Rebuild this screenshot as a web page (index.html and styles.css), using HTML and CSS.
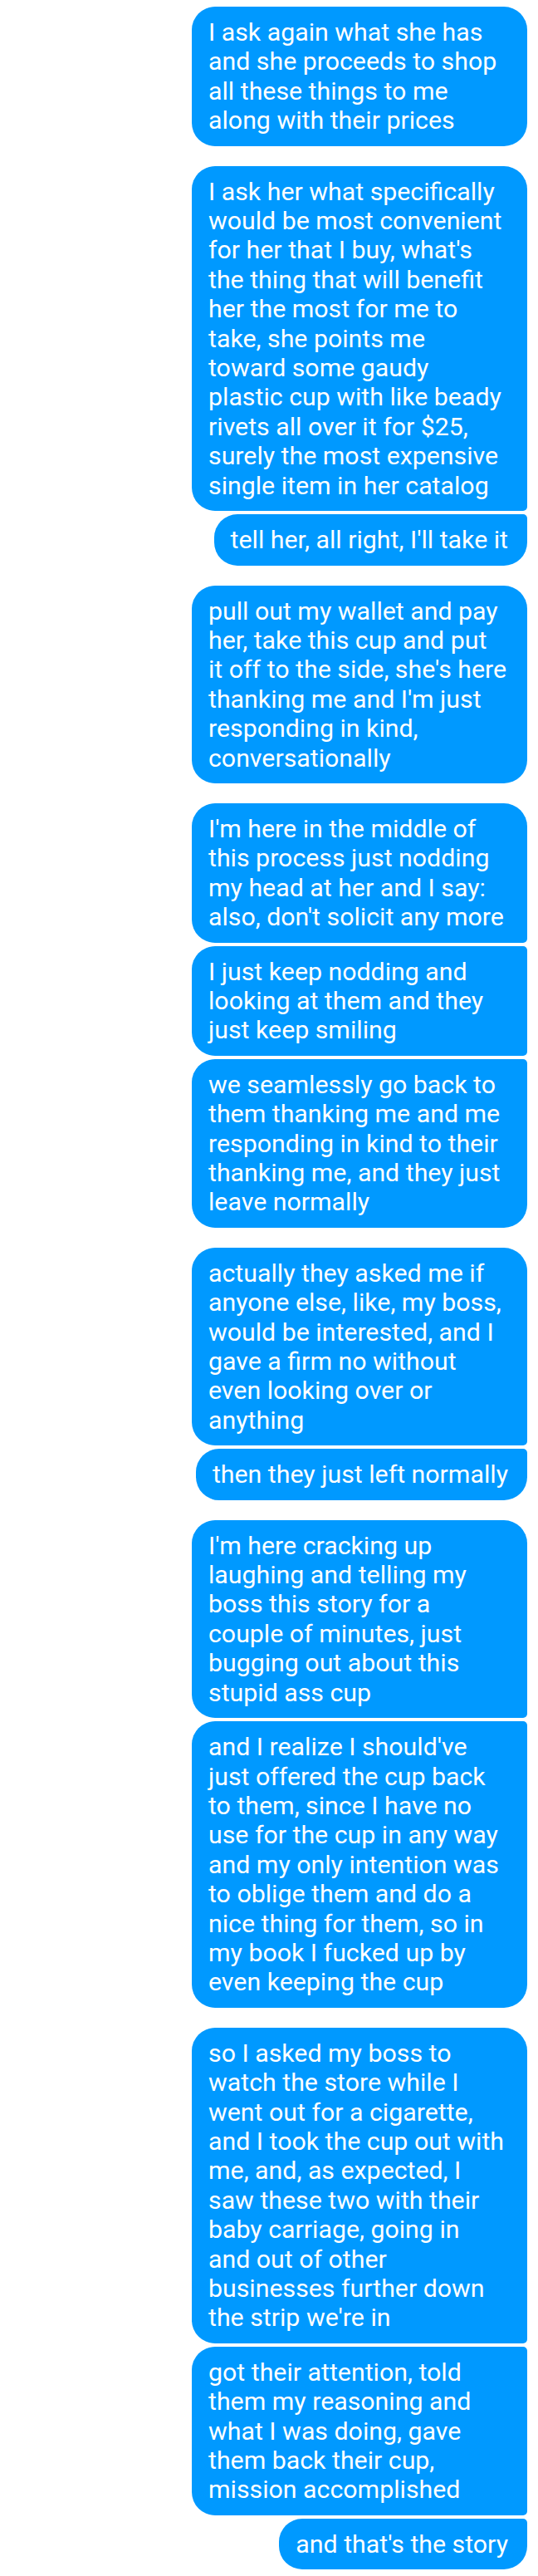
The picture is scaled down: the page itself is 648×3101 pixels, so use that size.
FILE: index.html
```html
<!DOCTYPE html>
<html lang="en">
<head>
<meta charset="utf-8">
<title>Conversation</title>
<link rel="stylesheet" href="styles.css">
</head>
<body>
<main class="thread">
  <div class="group">
    <div class="bubble">I ask again what she has and she proceeds to shop all these things to me along with their prices</div>
  </div>
  <div class="group">
    <div class="bubble">I ask her what specifically would be most convenient for her that I buy, what's the thing that will benefit her the most for me to take, she points me toward some gaudy plastic cup with like beady rivets all over it for $25, surely the most expensive single item in her catalog</div>
    <div class="bubble">tell her, all right, I'll take it</div>
  </div>
  <div class="group">
    <div class="bubble">pull out my wallet and pay her, take this cup and put<br>it off to the side, she's here thanking me and I'm just responding in kind, conversationally</div>
  </div>
  <div class="group">
    <div class="bubble">I'm here in the middle of this process just nodding my head at her and I say: also, don't solicit any more</div>
    <div class="bubble">I just keep nodding and looking at them and they just keep smiling</div>
    <div class="bubble">we seamlessly go back to them thanking me and me responding in kind to their thanking me, and they just leave normally</div>
  </div>
  <div class="group">
    <div class="bubble">actually they asked me if anyone else, like, my boss, would be interested, and I gave a firm no without even looking over or anything</div>
    <div class="bubble">then they just left normally</div>
  </div>
  <div class="group">
    <div class="bubble">I'm here cracking up laughing and telling my boss this story for a couple of minutes, just bugging out about this stupid ass cup</div>
    <div class="bubble">and I realize I should've just offered the cup back to them, since I have no use for the cup in any way and my only intention was to oblige them and do a nice thing for them, so in my book I fucked up by even keeping the cup</div>
  </div>
  <div class="group">
    <div class="bubble">so I asked my boss to watch the store while I went out for a cigarette, and I took the cup out with me, and, as expected, I saw these two with their baby carriage, going in<br>and out of other businesses further down the strip we're in</div>
    <div class="bubble">got their attention, told them my reasoning and what I was doing, gave them back their cup, mission accomplished</div>
    <div class="bubble">and that's the story</div>
  </div>
</main>
</body>
</html>
```

FILE: styles.css
```css
html, body {
  margin: 0;
  padding: 0;
  background: #ffffff;
}

.thread {
  display: flex;
  flex-direction: column;
  align-items: flex-end;
  gap: 24px;
  padding: 8px 13px 9px 13px;
  font-family: Roboto, "Noto Sans", sans-serif;
}

.group {
  display: flex;
  flex-direction: column;
  align-items: flex-end;
  gap: 4px;
  width: 100%;
}

.bubble {
  box-sizing: border-box;
  max-width: 404px;
  padding: 13px 23px 13px 20px;
  background: #0099ff;
  color: #ffffff;
  font-size: 30.3px;
  line-height: 35.4px;
  border-radius: 28px;
}

.group .bubble:not(:last-child) {
  border-bottom-right-radius: 5px;
}

.group .bubble:not(:first-child) {
  border-top-right-radius: 5px;
}
```
